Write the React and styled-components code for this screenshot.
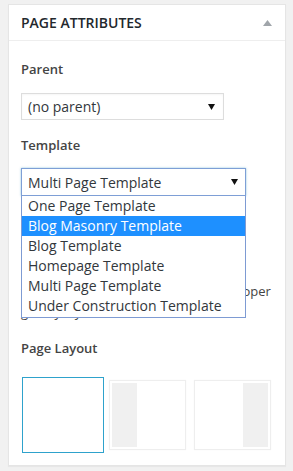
import React from 'react';
import styled, { createGlobalStyle } from 'styled-components';

const Global = createGlobalStyle`
  body {
    margin: 0;
    background: #f1f1f1;
    font-family: 'Open Sans', 'Noto Sans', sans-serif;
    color: #444;
  }
`;

// Styles
const Page = styled.div`
  padding: 4px 7px 5px 8px;
`;

const Box = styled.div`
  background: #fff;
  border: 1px solid #e5e5e5;
  box-shadow: 0 1px 1px rgba(0, 0, 0, 0.04);
`;

const Header = styled.div`
  display: flex;
  align-items: center;
  justify-content: space-between;
  height: 35px;
  padding: 0 13px 0 12px;
  border-bottom: 1px solid #eee;
`;

const Title = styled.h2`
  margin: 0;
  font-size: 14px;
  font-weight: 600;
  color: #23282d;
  text-transform: uppercase;
`;

const Inside = styled.div`
  padding: 18px 12px 12px;
`;

const Label = styled.p`
  margin: ${p => p.top || 0}px 0 0;
  font-size: 13px;
  font-weight: 600;
  line-height: 20px;
  color: #444;
`;

const Field = styled.div`
  position: relative;
  width: ${p => p.width}px;
  margin-top: ${p => p.top}px;
`;

const Select = styled.div`
  display: flex;
  align-items: center;
  justify-content: space-between;
  box-sizing: border-box;
  height: ${p => p.h}px;
  padding: 0 ${p => (p.focus ? 7 : 8)}px 0 6px;
  border: 1px solid ${p => (p.focus ? '#7e9fd6' : '#ddd')};
  box-shadow: ${p => (p.focus ? '0 0 2px rgba(30, 140, 190, 0.5)' : 'inset 0 1px 2px rgba(0,0,0,.04)')};
  font-size: 14px;
  color: #32373c;
  background: #fff;
`;

const List = styled.ul`
  position: absolute;
  top: 100%;
  left: 0;
  right: 0;
  margin: 0;
  padding: 0 0 1px;
  list-style: none;
  background: #fff;
  border: 1px solid #7e9bd3;
  border-top: none;
  z-index: 2;
`;

const Option = styled.li`
  height: 20px;
  line-height: 20px;
  padding-left: 6px;
  font-size: 14px;
  color: ${p => (p.active ? '#fff' : '#32373c')};
  background: ${p => (p.active ? '#1e90ff' : 'transparent')};
`;

const Help = styled.p`
  margin: 22px 0 0;
  font-size: 13px;
  line-height: 21px;
  color: #444;
  white-space: nowrap;
`;

const Layouts = styled.div`
  display: grid;
  grid-template-columns: repeat(3, 85px);
  margin-top: 19px;
  margin-left: -1px;
`;

const LayoutCell = styled.div`
  display: flex;
  justify-content: center;
  align-items: center;
  height: 76px;
`;

const LayoutImg = styled.div`
  box-sizing: border-box;
  display: flex;
  justify-content: ${p => (p.side === 'right' ? 'flex-end' : 'flex-start')};
  width: ${p => (p.selected ? 82 : 77)}px;
  height: ${p => (p.selected ? 76 : 70)}px;
  padding: 2px;
  border: 1px solid ${p => (p.selected ? '#2ea2cc' : '#eee')};
  box-shadow: ${p => (p.selected ? 'none' : '0 0 1px rgba(0,0,0,0.06)')};
  background: #fff;
`;

const Sidebar = styled.div`
  width: 25px;
  height: 100%;
  background: #f0f0f0;
`;

const Arrow = () => (
  <svg width="7" height="6" viewBox="0 0 7 6">
    <polygon points="0,0 7,0 3.5,6" fill="#111" />
  </svg>
);

const Toggle = () => (
  <svg width="9" height="6" viewBox="0 0 9 6">
    <polygon points="0,6 9,6 4.5,0" fill="#a0a5aa" />
  </svg>
);

const templates = [
  'One Page Template',
  'Blog Masonry Template',
  'Blog Template',
  'Homepage Template',
  'Multi Page Template',
  'Under Construction Template',
];

export default function App() {
  return (
    <Page>
      <Global />
      <Box>
        <Header>
          <Title>Page Attributes</Title>
          <Toggle />
        </Header>
        <Inside>
          <Label>Parent</Label>
          <Field width={203} top={14}>
            <Select h={27}>
              <span>(no parent)</span>
              <Arrow />
            </Select>
          </Field>
          <Label top={15}>Template</Label>
          <Field width={225} top={13}>
            <Select h={28} focus>
              <span>Multi Page Template</span>
              <Arrow />
            </Select>
            <List>
              {templates.map(t => (
                <Option key={t} active={t === 'Blog Masonry Template'}>{t}</Option>
              ))}
            </List>
          </Field>
          <Help>
            Some themes have custom<br />
            templates you can use for<br />
            certain pages. Choose the<br />
            the page and to display it with the proper<br />
            gallery layout.
          </Help>
          <Label top={15}>Page Layout</Label>
          <Layouts>
            <LayoutCell>
              <LayoutImg selected />
            </LayoutCell>
            <LayoutCell>
              <LayoutImg side="left"><Sidebar /></LayoutImg>
            </LayoutCell>
            <LayoutCell>
              <LayoutImg side="right"><Sidebar /></LayoutImg>
            </LayoutCell>
          </Layouts>
        </Inside>
      </Box>
    </Page>
  );
}
